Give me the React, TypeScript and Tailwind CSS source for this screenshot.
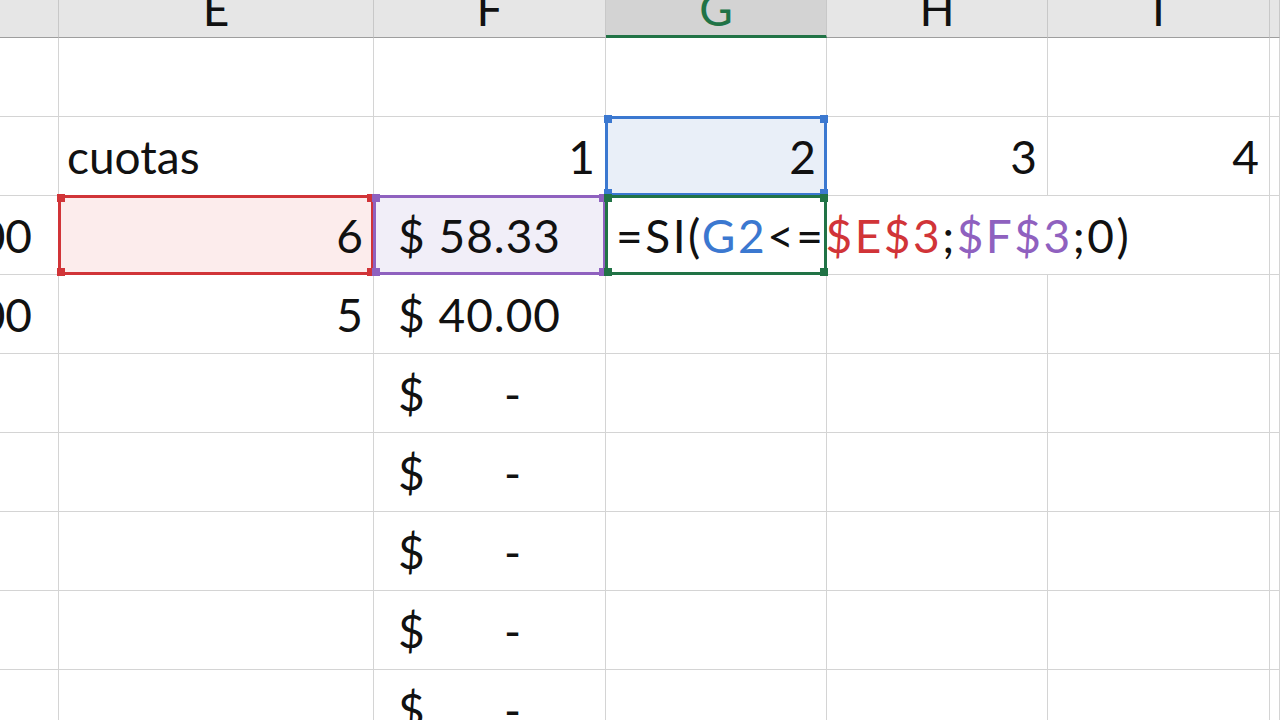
import React from 'react';

const cols = ['', 'E', 'F', 'G', 'H', 'I', ''];
const font = { fontFamily: 'Lato, "Open Sans", sans-serif' };

type Sel = { color: string; bg: string; handle: string };

const Handles = ({ c }: { c: string }) => (
  <>
    <span className={`absolute -left-[4px] -top-[4px] w-[8px] h-[8px] ${c}`} />
    <span className={`absolute -right-[4px] -top-[4px] w-[8px] h-[8px] ${c}`} />
    <span className={`absolute -left-[4px] -bottom-[4px] w-[8px] h-[8px] ${c}`} />
    <span className={`absolute -right-[4px] -bottom-[4px] w-[8px] h-[8px] ${c}`} />
  </>
);

const Cell = ({ children, sel, className = '' }: { children?: React.ReactNode; sel?: Sel; className?: string }) => (
  <div className={`relative border-r border-b border-[#d4d4d4] h-[79px] flex items-center ${sel ? sel.bg : ''} ${className}`}>
    {sel && (
      <div className={`absolute -left-px -top-px -right-px -bottom-px border-[3px] ${sel.color} z-10 pointer-events-none`}>
        <Handles c={sel.handle} />
      </div>
    )}
    {children}
  </div>
);

const Money = ({ v, sel }: { v: string; sel?: Sel }) =>
  v === '-' ? (
    <Cell sel={sel} className="justify-between pl-[24px] pr-[84px]">
      <span>$</span>
      <span>-</span>
    </Cell>
  ) : (
    <Cell sel={sel} className="pl-[24px]">
      <span className="whitespace-nowrap tracking-[1px]">$ {v}</span>
    </Cell>
  );

export default function App() {
  const red: Sel = { color: 'border-[#d13438]', bg: 'bg-[#fcecec]', handle: 'bg-[#d13438]' };
  const purple: Sel = { color: 'border-[#8f61bf]', bg: 'bg-[#f1eef8]', handle: 'bg-[#8f61bf]' };
  const blue: Sel = { color: 'border-[#3b78d0]', bg: 'bg-[#e9eff8]', handle: 'bg-[#3b78d0]' };
  const green: Sel = { color: 'border-[#217346]', bg: '', handle: 'bg-[#217346]' };
  return (
    <div className="w-[1280px] h-[720px] overflow-hidden bg-white text-[46px] text-[#111]" style={font}>
      <div className="grid grid-cols-[59px_315px_232px_221px_221px_222px_1fr]">
        {cols.map((c, i) => (
          <div
            key={i}
            className={`h-[38px] overflow-hidden flex justify-center border-r border-[#c8c8c8] ${
              c === 'G' ? 'bg-[#d3d3d3] border-b-[3px] border-b-[#217346] text-[#217346]' : 'bg-[#e6e6e6] border-b border-b-[#9e9e9e]'
            }`}
          >
            <span className="leading-none -mt-[14px]">{c}</span>
          </div>
        ))}

        {cols.map((_, i) => <Cell key={'r1' + i} />)}

        <Cell />
        <Cell className="pl-[8px]">cuotas</Cell>
        <Cell className="justify-end pr-[10px]">1</Cell>
        <Cell sel={blue} className="justify-end pr-[10px]">2</Cell>
        <Cell className="justify-end pr-[10px]">3</Cell>
        <Cell className="justify-end pr-[10px]">4</Cell>
        <Cell />

        <Cell className="justify-end pr-[26px] overflow-hidden"><span className="whitespace-nowrap">00</span></Cell>
        <Cell sel={red} className="justify-end pr-[10px]">6</Cell>
        <Money v="58.33" sel={purple} />
        <Cell sel={green} className="pl-[10px] z-20 overflow-visible">
          <span className="whitespace-nowrap tracking-[2.5px] relative z-20">
            =SI(<span className="text-[#3b78d0]">G2</span>&lt;=<span className="text-[#d13438]">$E$3</span>;<span className="text-[#8f61bf]">$F$3</span>;0)
          </span>
        </Cell>
        <Cell className="border-r-0" />
        <Cell />
        <Cell />

        <Cell className="justify-end pr-[26px] overflow-hidden"><span className="whitespace-nowrap">00</span></Cell>
        <Cell className="justify-end pr-[10px]">5</Cell>
        <Money v="40.00" />
        <Cell /><Cell /><Cell /><Cell />

        {[0, 1, 2, 3, 4].map(r => (
          <React.Fragment key={r}>
            <Cell /><Cell />
            <Money v="-" />
            <Cell /><Cell /><Cell /><Cell />
          </React.Fragment>
        ))}
      </div>
    </div>
  );
}
